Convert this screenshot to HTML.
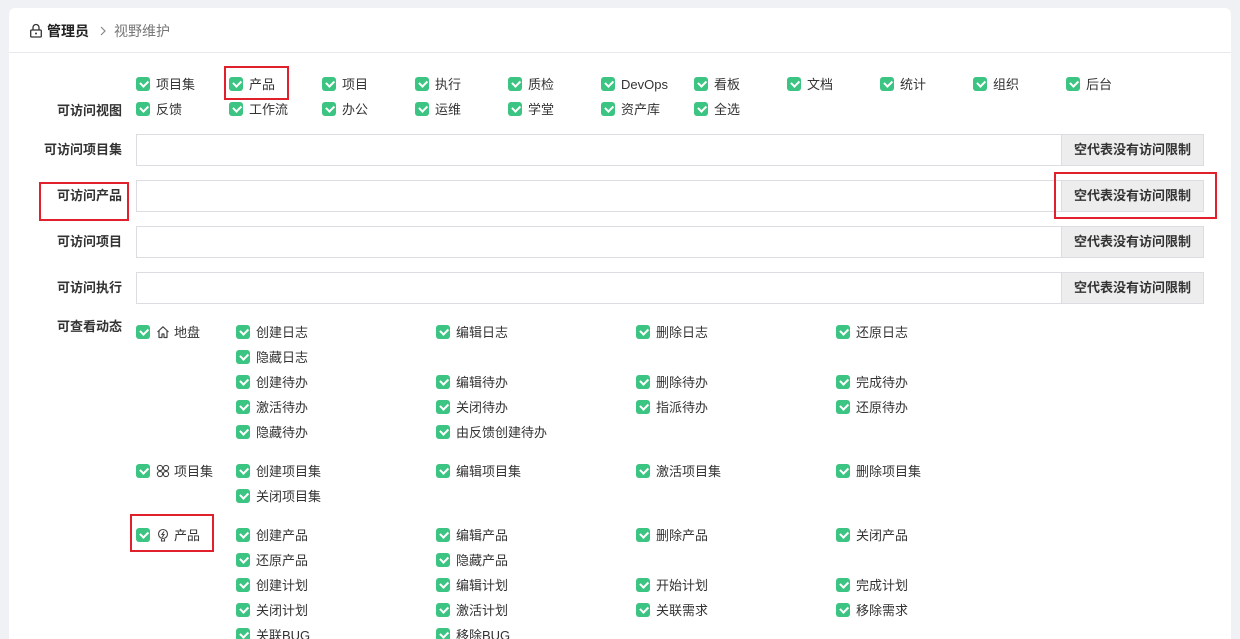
<!DOCTYPE html>
<html style="height:639px;overflow:hidden"><head><meta charset="utf-8"><style>
*{margin:0;padding:0;box-sizing:border-box}
body{width:1240px;height:639px;background:#f0f1f4;font-family:"Liberation Sans","Noto Sans CJK SC",sans-serif;font-size:13px;color:#333;position:relative;overflow:hidden}
.card{position:absolute;left:9px;top:8px;width:1222px;height:640px;background:#fff;border-radius:6px}
.hd{position:absolute;left:9px;top:52px;width:1222px;height:1px;background:#e8e9ec}
.cb{position:absolute;height:18px;line-height:18px;white-space:nowrap;padding-left:20px;margin-top:1px}
.cb:before{content:"";position:absolute;left:0;top:1px;width:14px;height:14px;border-radius:3px;background:#3bc482}
.cb:after{content:"";position:absolute;left:3.5px;top:3.5px;width:6px;height:3.5px;border-left:2px solid #fff;border-bottom:2px solid #fff;transform:rotate(-45deg)}
.lb{position:absolute;width:122px;text-align:right;font-weight:bold;color:#333;height:18px;line-height:18px}
.inp{position:absolute;left:136px;width:926px;height:32px;border:1px solid #dcdde0;background:#fff}
.btn{position:absolute;left:1061px;width:143px;height:32px;border:1px solid #dcdde0;background:#ededee;font-weight:bold;text-align:center;line-height:30px;font-size:13px}
.red{position:absolute;border:2px solid #e0202a}
</style></head><body>
<div class="card"></div>
<div class="hd"></div>
<svg style="position:absolute;left:29px;top:23px" width="14" height="15" viewBox="0 0 14 15"><path d="M4 7V4.5a3 3 0 0 1 6 0V7" fill="none" stroke="#333" stroke-width="1.3"/><rect x="1.7" y="7" width="10.6" height="7" rx="1" fill="none" stroke="#333" stroke-width="1.3"/><circle cx="7" cy="10.5" r="1" fill="#333"/></svg>
<div style="position:absolute;left:47px;top:21px;font-size:14px;font-weight:bold;color:#222">管理员</div>
<svg style="position:absolute;left:99px;top:26px" width="8" height="10" viewBox="0 0 8 10"><path d="M2 1l4 4-4 4" fill="none" stroke="#888" stroke-width="1.2"/></svg>
<div style="position:absolute;left:114px;top:21px;font-size:14px;color:#777">视野维护</div>

<div class="cb" style="left:136px;top:75px">项目集</div>
<div class="cb" style="left:229px;top:75px">产品</div>
<div class="cb" style="left:322px;top:75px">项目</div>
<div class="cb" style="left:415px;top:75px">执行</div>
<div class="cb" style="left:508px;top:75px">质检</div>
<div class="cb" style="left:601px;top:75px">DevOps</div>
<div class="cb" style="left:694px;top:75px">看板</div>
<div class="cb" style="left:787px;top:75px">文档</div>
<div class="cb" style="left:880px;top:75px">统计</div>
<div class="cb" style="left:973px;top:75px">组织</div>
<div class="cb" style="left:1066px;top:75px">后台</div>
<div class="lb" style="left:0;top:102px">可访问视图</div>
<div class="cb" style="left:136px;top:100px">反馈</div>
<div class="cb" style="left:229px;top:100px">工作流</div>
<div class="cb" style="left:322px;top:100px">办公</div>
<div class="cb" style="left:415px;top:100px">运维</div>
<div class="cb" style="left:508px;top:100px">学堂</div>
<div class="cb" style="left:601px;top:100px">资产库</div>
<div class="cb" style="left:694px;top:100px">全选</div>

<div class="lb" style="left:0;top:141px">可访问项目集</div><div class="inp" style="top:134px"></div><div class="btn" style="top:134px">空代表没有访问限制</div>
<div class="lb" style="left:0;top:187px">可访问产品</div><div class="inp" style="top:180px"></div><div class="btn" style="top:180px">空代表没有访问限制</div>
<div class="lb" style="left:0;top:233px">可访问项目</div><div class="inp" style="top:226px"></div><div class="btn" style="top:226px">空代表没有访问限制</div>
<div class="lb" style="left:0;top:279px">可访问执行</div><div class="inp" style="top:272px"></div><div class="btn" style="top:272px">空代表没有访问限制</div>

<div class="lb" style="left:0;top:318px">可查看动态</div>
<div class="cb" style="left:136px;top:323px"><svg style="vertical-align:-2px;margin-right:4px" width="14" height="14" viewBox="0 0 14 14"><path d="M1.5 7L7 1.8 12.5 7M3 5.8V12.5h3V9h2v3.5h3V5.8" fill="none" stroke="#444" stroke-width="1.2" stroke-linejoin="round"/></svg>地盘</div>
<div class="cb" style="left:236px;top:323px">创建日志</div><div class="cb" style="left:436px;top:323px">编辑日志</div><div class="cb" style="left:636px;top:323px">删除日志</div><div class="cb" style="left:836px;top:323px">还原日志</div>
<div class="cb" style="left:236px;top:348px">隐藏日志</div>
<div class="cb" style="left:236px;top:373px">创建待办</div><div class="cb" style="left:436px;top:373px">编辑待办</div><div class="cb" style="left:636px;top:373px">删除待办</div><div class="cb" style="left:836px;top:373px">完成待办</div>
<div class="cb" style="left:236px;top:398px">激活待办</div><div class="cb" style="left:436px;top:398px">关闭待办</div><div class="cb" style="left:636px;top:398px">指派待办</div><div class="cb" style="left:836px;top:398px">还原待办</div>
<div class="cb" style="left:236px;top:423px">隐藏待办</div><div class="cb" style="left:436px;top:423px">由反馈创建待办</div>

<div class="cb" style="left:136px;top:462px"><svg style="vertical-align:-2px;margin-right:4px" width="14" height="14" viewBox="0 0 14 14" fill="none" stroke="#444" stroke-width="1.1"><circle cx="4" cy="4" r="2.6"/><circle cx="10" cy="4" r="2.6"/><circle cx="4" cy="10" r="2.6"/><circle cx="10" cy="10" r="2.6"/></svg>项目集</div>
<div class="cb" style="left:236px;top:462px">创建项目集</div><div class="cb" style="left:436px;top:462px">编辑项目集</div><div class="cb" style="left:636px;top:462px">激活项目集</div><div class="cb" style="left:836px;top:462px">删除项目集</div>
<div class="cb" style="left:236px;top:487px">关闭项目集</div>

<div class="cb" style="left:136px;top:526px"><svg style="vertical-align:-2px;margin-right:4px" width="14" height="14" viewBox="0 0 14 14" fill="none" stroke="#444" stroke-width="1.1"><circle cx="7" cy="6" r="4.5"/><path d="M8 3.5L6 6.5h2l-2 3M5.5 11v2h3v-2"/></svg>产品</div>
<div class="cb" style="left:236px;top:526px">创建产品</div><div class="cb" style="left:436px;top:526px">编辑产品</div><div class="cb" style="left:636px;top:526px">删除产品</div><div class="cb" style="left:836px;top:526px">关闭产品</div>
<div class="cb" style="left:236px;top:551px">还原产品</div><div class="cb" style="left:436px;top:551px">隐藏产品</div>
<div class="cb" style="left:236px;top:576px">创建计划</div><div class="cb" style="left:436px;top:576px">编辑计划</div><div class="cb" style="left:636px;top:576px">开始计划</div><div class="cb" style="left:836px;top:576px">完成计划</div>
<div class="cb" style="left:236px;top:601px">关闭计划</div><div class="cb" style="left:436px;top:601px">激活计划</div><div class="cb" style="left:636px;top:601px">关联需求</div><div class="cb" style="left:836px;top:601px">移除需求</div>
<div class="cb" style="left:236px;top:626px">关联BUG</div><div class="cb" style="left:436px;top:626px">移除BUG</div>

<div class="red" style="left:224px;top:66px;width:65px;height:34px"></div>
<div class="red" style="left:39px;top:182px;width:90px;height:39px"></div>
<div class="red" style="left:1054px;top:172px;width:163px;height:47px"></div>
<div class="red" style="left:130px;top:514px;width:84px;height:38px"></div>
</body></html>
